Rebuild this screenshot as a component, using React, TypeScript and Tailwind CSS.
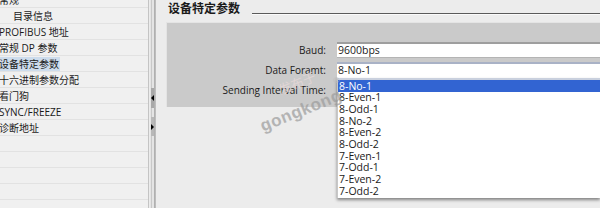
import React from "react";

const F = { fontFamily: '"Open Sans", "Noto Sans CJK SC", sans-serif' };

const rows: { t: string; indent?: boolean; sel?: boolean }[] = [
  { t: "常规" },
  { t: "目录信息", indent: true },
  { t: "PROFIBUS 地址" },
  { t: "常规 DP 参数" },
  { t: "设备特定参数", sel: true },
  { t: "十六进制参数分配" },
  { t: "看门狗" },
  { t: "SYNC/FREEZE" },
  { t: "诊断地址" },
  { t: "" },
  { t: "" },
  { t: "" },
  { t: "" },
  { t: "" },
];

const options = [
  "8-No-1",
  "8-Even-1",
  "8-Odd-1",
  "8-No-2",
  "8-Even-2",
  "8-Odd-2",
  "7-Even-1",
  "7-Odd-1",
  "7-Even-2",
  "7-Odd-2",
];

export default function App() {
  return (
    <div
      className="relative flex w-[600px] h-[208px] overflow-hidden bg-[#f0f0f0] text-[10px] text-[#1a1a1a]"
      style={F}
    >
      {/* Left tree */}
      <div className="w-[148px] shrink-0 flex flex-col overflow-hidden bg-[#f0f0f0]">
        <div className="flex flex-col -mt-[8px]">
          {rows.map((r, i) => (
            <div
              key={i}
              className="h-[16px] shrink-0 flex items-center border-b border-[#e2e2e2] leading-none"
            >
              <span
                className={
                  (r.indent ? "ml-[13px] " : "-ml-[1px] ") +
                  (r.sel ? "bg-[#cddcec] h-[14px] flex items-center pr-[1px]" : "")
                }
              >
                {r.t}
              </span>
            </div>
          ))}
        </div>
      </div>

      {/* Splitter */}
      <div className="w-[8px] shrink-0 flex border-l border-[#c4c4c4] border-r border-r-[#bdbdbd] bg-[#e4e4e4]">
        <div className="w-[1px] bg-[#ececec]" />
        <div className="w-[1px] bg-[#c8c8c8] ml-[1px]" />
        <div className="flex-1 flex flex-col pt-[88px] gap-[9px]">
          <div className="h-[20px] bg-[#a8a8a8] flex items-center justify-center">
            <div className="w-0 h-0 border-y-[3px] border-y-transparent border-r-[3px] border-r-black" />
          </div>
          <div className="h-[19px] bg-[#b8b8b8] flex items-center justify-center">
            <div className="w-0 h-0 border-y-[3px] border-y-transparent border-l-[3px] border-l-black" />
          </div>
        </div>
        <div className="w-[1px] bg-[#b0b0b0]" />
      </div>

      {/* Right content */}
      <div className="flex-1 flex flex-col bg-[#ececec]">
        <div className="h-[22px] shrink-0 flex items-start">
          <div className="ml-[12px] mt-[1px] text-[12px] font-bold leading-[16px] text-[#1a1a1a]">
            设备特定参数
          </div>
          <div className="flex-1 ml-[12px] mt-[13px] h-[2px] border-t border-[#5a5a5a] border-b border-b-[#fafafa]" />
        </div>
        <div className="ml-[10px] h-[85px] shrink-0 bg-[#cacaca] border-l border-t border-[#e4e4e4] flex flex-col pt-[19px]">
          <div className="flex items-center h-[16px]">
            <div className="w-[160px] text-right pr-[1px]">Baud:</div>
            <div className="ml-[10px] flex-1 h-[16px] bg-white border-t-[2px] border-[#9e9e9e] border-b border-b-[#b4b4b4] flex items-center pl-[1px] text-[10.5px]">
              9600bps
            </div>
          </div>
          <div className="flex items-center h-[16px] mt-[4px]">
            <div className="w-[160px] text-right pr-[1px]">Data Foramt:</div>
            <div className="ml-[10px] flex-1 h-[16px] bg-white border-t-[2px] border-[#a9b2c6] flex items-center pl-[1px] text-[10.5px]">
              8-No-1
            </div>
          </div>
          <div className="flex items-center h-[16px] mt-[4px]">
            <div className="w-[160px] text-right pr-[1px]">Sending Interval Time:</div>
          </div>
        </div>
      </div>

      {/* Dropdown list */}
      <div className="absolute left-[337px] top-[78px] w-[263px] bg-white border-l border-[#c8c8c8] border-t-[2px] border-t-[#c9d0de] shadow-[0_2px_3px_rgba(0,0,0,0.45)] flex flex-col pb-[1px] text-[10.5px]">
        {options.map((o, i) => (
          <div
            key={o}
            className={
              "h-[11.7px] flex items-center pl-[1px] leading-none " +
              (i === 0 ? "bg-[#3264d2] text-white" : "text-[#1a1a1a]")
            }
          >
            {o}
          </div>
        ))}
      </div>

      {/* Watermark */}
      <div className="absolute left-[278px] top-[74px] -rotate-[22deg] text-[13px] text-[#e6d8d8] opacity-80 pointer-events-none">
        发布于
      </div>
      <div className="absolute left-[333px] top-[74px] text-[8px] text-[#bcbcbc] pointer-events-none">
        ®
      </div>
      <div
        className="absolute left-[258px] top-[98px] -rotate-[22deg] text-[17px] font-bold text-[#9c9c9c] opacity-70 pointer-events-none tracking-[0.5px]"
        style={{ fontFamily: '"Liberation Sans", sans-serif' }}
      >
        gongkong
      </div>
    </div>
  );
}
